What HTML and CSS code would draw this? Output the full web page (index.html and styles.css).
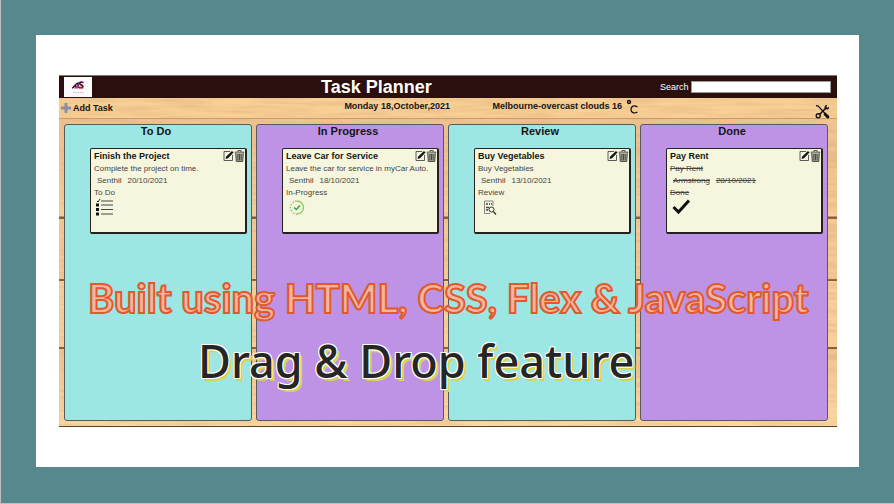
FILE: index.html
```html
<!DOCTYPE html>
<html lang="en">
<head>
<meta charset="utf-8">
<title>Task Planner</title>
<link rel="stylesheet" href="styles.css">
</head>
<body>
<svg class="sprites" aria-hidden="true">
  <symbol id="edit" viewBox="0 0 22 22">
    <path d="M14 2H2v18h17V9" fill="none" stroke="#333" stroke-width="1.6"/>
    <path d="M5 17l1.500-5L18 1l3 3L10 15.500z" fill="#111"/>
  </symbol>
  <symbol id="trash" viewBox="0 0 20 22">
    <path d="M3 6h14l-1 15H4z" fill="#aaa999"/>
    <path d="M1 4h18M7 4V1h6v3M3 5l1 16h12l1-16M7 7v12M10 7v12M13 7v12" fill="none" stroke="#333" stroke-width="1.500"/>
  </symbol>
</svg>
<main class="slide">
  <section class="sheet">
    <div class="app">
      <svg class="grain" aria-hidden="true">
        <filter id="wood" x="0" y="0" width="100%" height="100%">
          <feTurbulence type="fractalNoise" baseFrequency="0.02 0.3" numOctaves="3" seed="4"/>
          <feColorMatrix values="0 0 0 0 .6  0 0 0 0 .35  0 0 0 0 .15  .6 0 0 0 -.2"/>
        </filter>
        <rect width="100%" height="100%" filter="url(#wood)"/>
      </svg>
      <header class="top">
        <svg class="logo" viewBox="0 0 28 20" role="img" aria-label="AS">
          <rect width="28" height="20" fill="#fbfafb"/>
          <path d="M8 11c2 0 4-5 6-5v5M9 9.500h5" fill="none" stroke="#3a1233" stroke-width="1.600"/>
          <path d="M10 11.500l4-4.500v4.500z" fill="#e51aa2"/>
          <path d="M19.500 5.500c-4-1.500-5 1.500-2.500 2.300 3 .9 2.500 3.500-2 2.700" fill="none" stroke="#56103f" stroke-width="1.800"/>
          <path d="M15 11.300h4" stroke="#ef5b52" stroke-width="1.200"/>
          <path d="M9 15.500h11" stroke="#e3c9d8" stroke-width="1"/>
        </svg>
        <h1>Task Planner</h1>
        <div class="search"><label for="q">Search</label><input id="q" type="text"></div>
      </header>
      <div class="bar">
        <button class="add" type="button">
          <svg viewBox="0 0 10 10" aria-hidden="true"><path d="M5 0v10M0 5h10" stroke="#8b8fa6" stroke-width="3"/></svg>Add Task
        </button>
        <span class="date">Monday 18,October,2021</span>
        <span class="weather">Melbourne-overcast clouds 16
          <svg viewBox="0 0 12 16" role="img" aria-label="degrees Celsius"><circle cx="3" cy="4" r="1.500" fill="none" stroke="#111" stroke-width="1.400"/><path d="M11.500 9C8 6.500 5 8.500 5 11.500s3 4.500 6.500 2.500" fill="none" stroke="#111" stroke-width="1.300"/></svg>
        </span>
        <button class="tools" type="button" aria-label="Settings">
          <svg viewBox="0 0 28 28" aria-hidden="true">
            <path d="M2 3l4 1 13 14" fill="none" stroke="#111" stroke-width="2.500"/>
            <path d="M19 19l5 5" stroke="#111" stroke-width="5.500" stroke-linecap="round"/>
            <path d="M8 20L20 8" stroke="#111" stroke-width="3"/>
            <path d="M23 2c-4-1-6 3-5 6l2 2c4 1 7-1 6-5l-3 2-2-2z" fill="#111"/>
            <circle cx="6" cy="22" r="3.800" fill="none" stroke="#111" stroke-width="2.400"/>
          </svg>
        </button>
      </div>
      <div class="board">
        <section class="column">
          <h2>To Do</h2>
          <article class="card">
            <div class="head"><h3>Finish the Project</h3><button type="button" aria-label="Edit"><svg viewBox="0 0 22 22"><use href="#edit"/></svg></button><button type="button" aria-label="Delete"><svg viewBox="0 0 20 22"><use href="#trash"/></svg></button></div>
            <p>Complete the project on time.</p>
            <p class="meta"><span>Senthil</span><span>20/10/2021</span></p>
            <p>To Do</p>
            <svg class="status" viewBox="0 0 20 18" aria-hidden="true"><path d="M2 2l1 1 2-3" fill="none" stroke="#222"/><path d="M1 4.500h3v3H1zM1 9h3v3H1zM1 13.500h3v3H1z" fill="#111"/><path d="M6 2h12M6 6h12M6 10.500h12M6 15h12" stroke="#444" stroke-width="1.200"/></svg>
          </article>
        </section>
        <section class="column purple">
          <h2>In Progress</h2>
          <article class="card">
            <div class="head"><h3>Leave Car for Service</h3><button type="button" aria-label="Edit"><svg viewBox="0 0 22 22"><use href="#edit"/></svg></button><button type="button" aria-label="Delete"><svg viewBox="0 0 20 22"><use href="#trash"/></svg></button></div>
            <p>Leave the car for service in myCar Auto.</p>
            <p class="meta"><span>Senthil</span><span>18/10/2021</span></p>
            <p>In-Progress</p>
            <svg class="status" viewBox="0 0 20 18" aria-hidden="true"><path d="M10 2a6.500 6.500 0 1 1 0 13" fill="none" stroke="#8ecb62" stroke-width="1.400"/><path d="M10 15a6.500 6.500 0 0 1 0-13" fill="none" stroke="#8ecb62" stroke-width="1.400" stroke-dasharray="1.500 1.500"/><path d="M7 8.500l2.300 2L13 6.500" fill="none" stroke="#35a653" stroke-width="1.600"/></svg>
          </article>
        </section>
        <section class="column">
          <h2>Review</h2>
          <article class="card">
            <div class="head"><h3>Buy Vegetables</h3><button type="button" aria-label="Edit"><svg viewBox="0 0 22 22"><use href="#edit"/></svg></button><button type="button" aria-label="Delete"><svg viewBox="0 0 20 22"><use href="#trash"/></svg></button></div>
            <p>Buy Vegetables</p>
            <p class="meta"><span>Senthil</span><span>13/10/2021</span></p>
            <p>Review</p>
            <svg class="status" viewBox="0 0 20 18" aria-hidden="true"><path d="M14 7V2H5.500v12.500H11" fill="none" stroke="#777" stroke-width=".9"/><path d="M7 5h2M10 5h1M12 5h1M7 8.500h3M7 11h2" stroke="#444" stroke-width="1.300"/><circle cx="12.500" cy="10.500" r="2.500" fill="none" stroke="#333"/><path d="M14.300 12.500l2.700 3" stroke="#333" stroke-width="1.200"/></svg>
          </article>
        </section>
        <section class="column purple">
          <h2>Done</h2>
          <article class="card done">
            <div class="head"><h3>Pay Rent</h3><button type="button" aria-label="Edit"><svg viewBox="0 0 22 22"><use href="#edit"/></svg></button><button type="button" aria-label="Delete"><svg viewBox="0 0 20 22"><use href="#trash"/></svg></button></div>
            <p>Pay Rent</p>
            <p class="meta"><span>Armstrong</span><span>28/10/2021</span></p>
            <p>Done</p>
            <svg class="status" viewBox="0 0 20 18" aria-hidden="true"><path d="M2.500 8l5 5L18 1.500" fill="none" stroke="#111" stroke-width="3"/></svg>
          </article>
        </section>
      </div>
      <div class="captions">
        <p class="built">Built using HTML, CSS, Flex &amp; JavaScript</p>
        <p class="drag">Drag &amp; Drop feature</p>
      </div>
    </div>
  </section>
</main>
</body>
</html>
```
FILE: styles.css
```css
* { box-sizing: border-box; }
body { margin: 0; font-family: "Liberation Sans", Arial, sans-serif; color: #151515; }
h1, h2, h3, p { margin: 0; }
button { padding: 0; border: 0; background: none; font: inherit; color: inherit; }
svg { display: block; }
.sprites { position: absolute; width: 0; height: 0; }

.slide {
  display: flex;
  min-height: 100vh;
  padding: 35px 35px 36px;
  background: #56888d;
  border: 0 solid #bfbfbf;
  border-width: 0 0 1px 1px;
}
.sheet { display: flex; flex: 1; padding: 40px 22px 40px 23px; background: #fff; }
.app {
  position: relative;
  isolation: isolate;
  display: flex;
  flex: 1;
  flex-direction: column;
  min-width: 0;
  padding-bottom: 5px;
  border-top: 1px solid #777;
  border-bottom: 1px solid #554433;
  background: linear-gradient(#f8cf95 42px, #c89c6a 42px 43px, #f0c490 43px 80px, #f8d09a 140px, #7d5636 141px 143px, #f5c994 143px 203px, #865c3a 203px 205px, #f8d09a 205px 271px, #865c3a 271px 273px, #f0c490 273px, #fbd8a2);
}
.grain { position: absolute; inset: 0; z-index: -1; width: 100%; height: 100%; }

.top {
  display: grid;
  grid-template-columns: minmax(0, 257fr) minmax(0, 334fr) minmax(0, 176fr);
  align-items: center;
  height: 22px;
  padding: 0 6px 0 5px;
  background: #2a0f0c;
  color: #fff;
}
.logo { width: 28px; height: 20px; }
.top h1 { font-size: 18px; line-height: 22px; }
.search { display: flex; align-items: center; gap: 2px; font-size: 9px; }
.search input { flex: 1; min-width: 0; height: 12px; padding: 0 2px; border: 1px solid #999; background: #fff; }
.search label { margin-left: 5px; }

.bar {
  display: grid;
  grid-template-columns: 283fr 148fr 322fr 16px;
  height: 26px;
  padding: 0 6px 0 2px;
  font-size: 9px;
  font-weight: 700;
  line-height: 16px;
}
.add { display: flex; align-items: center; gap: 2px; height: 20px; }
.add svg { width: 10px; height: 10px; }
.date, .weather { white-space: nowrap; }
.weather { display: flex; gap: 4px; }
.weather svg { width: 12px; height: 16px; }
.tools { align-self: center; }
.tools svg { width: 15px; height: 15px; }

.board { display: grid; flex: 1; grid-template-columns: repeat(4, 1fr); gap: 4px; padding: 0 9px 0 5px; }
.column { min-width: 0; padding: 0 4px 8px 25px; border: 1px solid #555b5e; border-radius: 3px; background: #9ce6e3; }
.purple { background: #be93e5; }
.column h2 { margin-left: -25px; font-size: 11px; line-height: 13px; text-align: center; }
.card { height: 86px; margin-top: 10px; padding: 0 0 0 3px; border: 2px solid #222; border-width: 1px 2px 2px 1px; border-radius: 2px; background: #f6f6df; color: #444; font-size: 8px; line-height: 11px; }
.head { display: flex; color: #151515; }
.head h3 { flex: 1; font-size: 9px; line-height: 14px; white-space: nowrap; }
.head svg { width: 11px; height: 12px; }
.card p { white-space: nowrap; }
.card .meta { display: flex; gap: 6px; padding-left: 3px; line-height: 13px; }
.done p { text-decoration: line-through; }
.done .meta span { text-decoration: line-through; }
.status { width: 20px; height: 18px; margin: 1px 0 0 1px; }

.captions { position: absolute; top: 194px; left: 29px; right: 0; font-family: "Noto Sans", sans-serif; white-space: nowrap; }
.built { font-family: Lato, sans-serif; font-size: 40px; line-height: 56px; font-weight: 700; color: #f7b5a0; -webkit-text-stroke: 2px #df5a2d; }
.drag { padding-left: 110px; font-size: 45px; line-height: 70px; font-weight: 500; color: #262626; text-shadow: -1px -1px #fff, 1px -1px #fff, -1px 1px #fff, 1px 1px #fff, 2px 2px #d8d34f, 3px 3px #d8d34f; }
```
